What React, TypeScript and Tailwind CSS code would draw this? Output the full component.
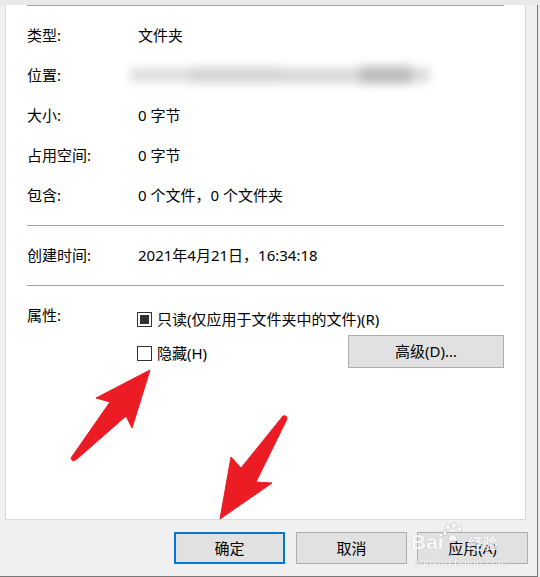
const rows = [
  { label: '类型:', value: '文件夹' },
  { label: '位置:', value: null },
  { label: '大小:', value: '0 字节' },
  { label: '占用空间:', value: '0 字节' },
  { label: '包含:', value: '0 个文件，0 个文件夹' },
]

function Checkbox({ checked }: { checked?: boolean }) {
  return (
    <div className="w-[15px] h-[15px] border border-[#333] bg-white flex items-center justify-center shrink-0">
      {checked && <div className="w-[9px] h-[9px] bg-[#333]" />}
    </div>
  )
}

function BlurredPath() {
  // location is blurred out in the screenshot
  return (
    <div className="-ml-[8px] w-[300px] h-[22px] flex items-center blur-[5px]">
      <div className="w-[60px] h-[14px] bg-[#dedede]" />
      <div className="w-[90px] h-[16px] bg-[#d4d4d4]" />
      <div className="w-[80px] h-[15px] bg-[#d8d8d8]" />
      <div className="w-[52px] h-[18px] bg-[#bdbdbd]" />
      <div className="w-[18px] h-[14px] bg-[#dadada]" />
    </div>
  )
}

export default function App() {
  return (
    <div className="w-[540px] h-[577px] bg-[#e9e9e9] overflow-hidden font-['Noto_Sans','Noto_Sans_CJK_SC',sans-serif] text-[15px] text-black">
      <div className="relative w-[538px] h-[572px] bg-[#f0f0f0] border-r border-b border-[#787878]">
        <div className="ml-[5px] w-[521px] h-[515px] bg-white border-x border-b border-[#d9d9d9] px-[21px]">
          <div className="mt-[5px] h-px bg-[#a0a0a0]" />
          <div className="mt-[9px]">
            {rows.map((r) => (
              <div key={r.label} className="h-[40px] flex items-center">
                <div className="w-[111px]">{r.label}</div>
                {r.value ? <div>{r.value}</div> : <BlurredPath />}
              </div>
            ))}
          </div>
          <div className="mt-[10px] h-px bg-[#a0a0a0]" />
          <div className="mt-[9px] h-[40px] flex items-center">
            <div className="w-[111px]">创建时间:</div>
            <div>2021年4月21日，16:34:18</div>
          </div>
          <div className="mt-[10px] h-px bg-[#a0a0a0]" />
          <div className="flex">
            <div className="w-[110px] mt-[18px] leading-[22px]">属性:</div>
            <div className="flex-1 mt-[22px]">
              <div className="h-[22px] flex items-center gap-[5px]">
                <Checkbox checked />
                <span>只读(仅应用于文件夹中的文件)(R)</span>
              </div>
              <div className="mt-[5px] flex justify-between items-start">
                <div className="mt-[7px] h-[22px] flex items-center gap-[5px]">
                  <Checkbox />
                  <span>隐藏(H)</span>
                </div>
                <button className="w-[156px] h-[33px] bg-[#e1e1e1] border border-[#adadad]">高级(D)...</button>
              </div>
            </div>
          </div>
        </div>

        <div className="flex pl-[174px] pt-[12px]">
          <button className="w-[111px] h-[32px] bg-[#e1e1e1] border-2 border-[#0078d7]">确定</button>
          <button className="ml-[11px] w-[111px] h-[32px] bg-[#e1e1e1] border border-[#adadad]">取消</button>
          <button className="ml-[10px] w-[111px] h-[32px] bg-[#e1e1e1] border border-[#adadad]">应用(A)</button>
        </div>

        {/* red arrows drawn over the screenshot */}
        <svg className="absolute left-0 top-0 pointer-events-none" width="538" height="572" viewBox="0 0 538 572">
          <path
            d="M150,365 L132,423 L126,411 L77,454 Q72,458 71,453 L110,397 L96,393 Z"
            fill="#ec1c24"
            stroke="#ec1c24"
            strokeWidth="1"
            strokeLinejoin="round"
          />
          <path
            d="M283,411 Q287,410 287,414 L256,477 L272,478 L220,514 L231,452 L241,463 Z"
            fill="#ec1c24"
            stroke="#ec1c24"
            strokeWidth="1"
            strokeLinejoin="round"
          />
        </svg>

        {/* baidu jingyan watermark */}
        <div className="absolute left-[411px] top-[517px] pointer-events-none text-white opacity-80 [text-shadow:0_0_1px_#9a9a9a]">
          <div className="flex items-end h-[32px]">
            <span className="text-[21px] font-bold leading-[24px] font-['Liberation_Sans',sans-serif]">Bai</span>
            <svg width="22" height="22" viewBox="0 0 22 22" className="-ml-[2px] mb-[10px]">
              <g fill="#fff" stroke="#b5b5b5" strokeWidth="0.7">
                <ellipse cx="6" cy="5" rx="2.3" ry="3" />
                <ellipse cx="12" cy="3.5" rx="2.3" ry="3" />
                <ellipse cx="17.5" cy="7" rx="2.2" ry="2.8" />
                <ellipse cx="3" cy="11" rx="2" ry="2.6" />
                <path d="M6,17 Q10,8 15,16 Q16,20 11,19 Q6,21 6,17 Z" />
              </g>
            </svg>
            <span className="ml-[4px] text-[15px] leading-[22px] font-bold">经验</span>
          </div>
          <div className="text-[11px] leading-[14px] mt-[1px] ml-[3px] font-['Liberation_Sans',sans-serif] tracking-[0.3px]">jingyan.baidu.com</div>
        </div>
      </div>
    </div>
  )
}
